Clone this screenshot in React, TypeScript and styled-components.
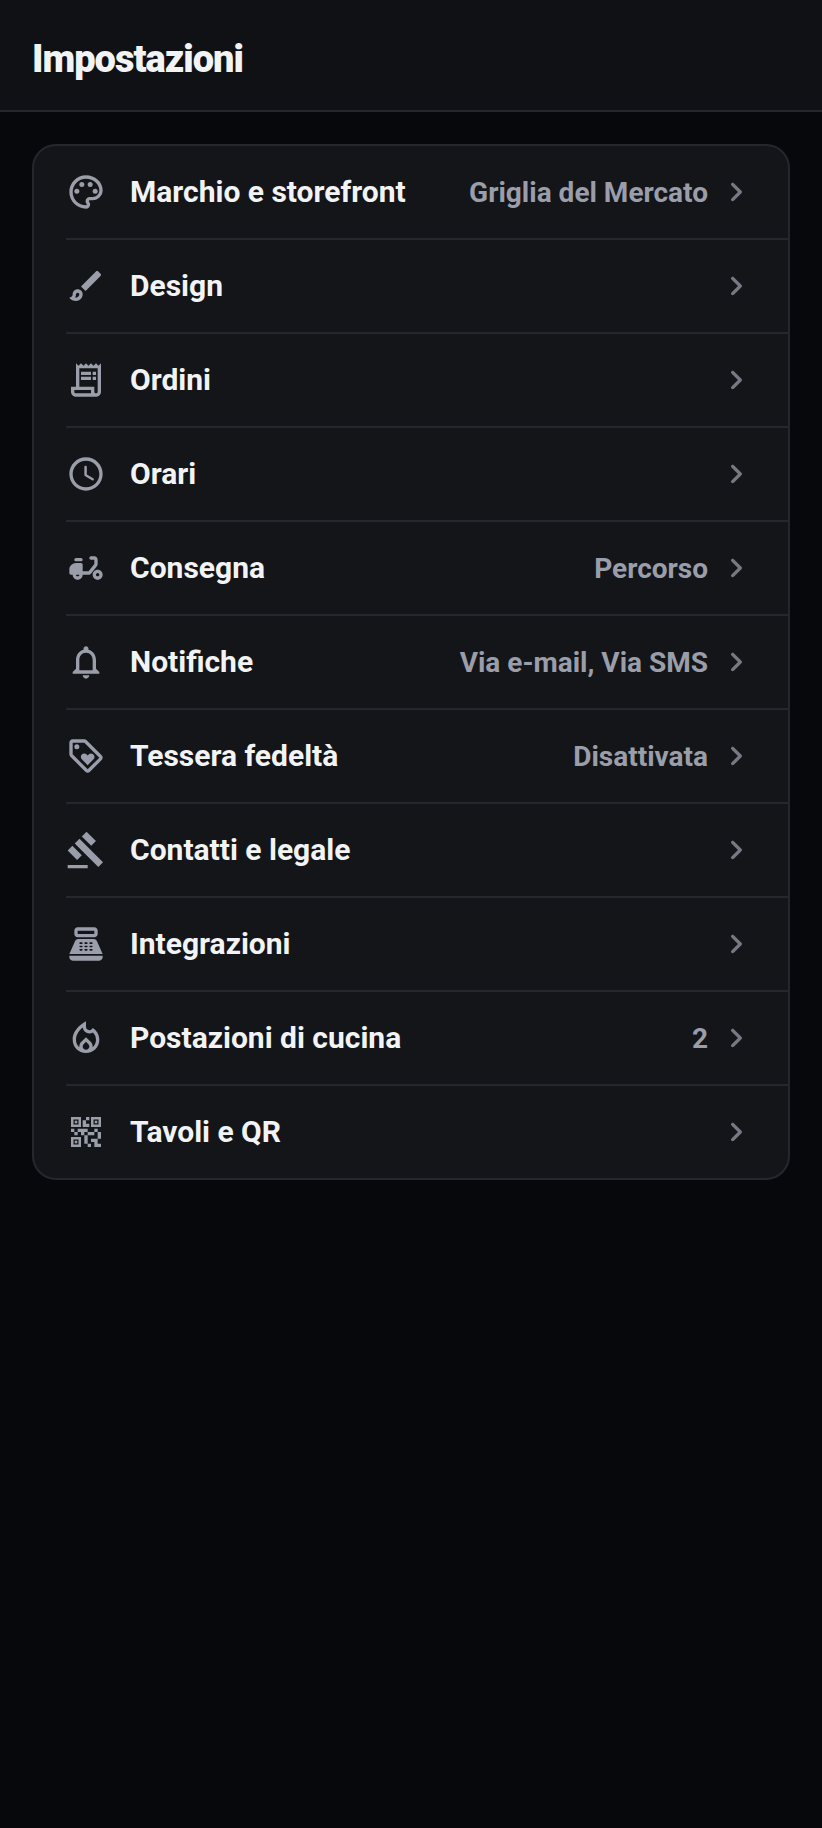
import React from 'react';
import styled, { createGlobalStyle } from 'styled-components';
import type { IconType } from 'react-icons';
import {
  MdOutlinePalette,
  MdOutlineBrush,
  MdOutlineReceiptLong,
  MdNotificationsNone,
  MdOutlineLoyalty,
  MdGavel,
  MdPointOfSale,
  MdOutlineLocalFireDepartment,
  MdQrCode2,
} from 'react-icons/md';

const color = {
  page: '#07080b',
  header: '#101114',
  card: '#141518',
  line: '#24282e',
  text: '#f2f3f5',
  muted: '#9a9eaa',
  chevron: '#767983',
};

const GlobalStyle = createGlobalStyle`
  *, *::before, *::after { box-sizing: border-box; }
  body {
    margin: 0;
    background: ${color.page};
    color: ${color.text};
    font-family: Roboto, sans-serif;
  }
`;

const Page = styled.div`
  min-height: 100vh;
`;

const Header = styled.header`
  padding: 36px 32px 28px;
  background: ${color.header};
  border-bottom: 2px solid ${color.line};
`;

const Title = styled.h1`
  margin: 0;
  font-size: 38px;
  line-height: 46px;
  font-weight: 900;
  letter-spacing: -1px;
`;

const Main = styled.main`
  padding: 32px;
`;

const Menu = styled.ul`
  margin: 0;
  padding: 0 0 0 32px;
  list-style: none;
  background: ${color.card};
  border: 2px solid ${color.line};
  border-radius: 24px;
`;

const Item = styled.li`
  & + & {
    border-top: 2px solid ${color.line};
  }
`;

const Row = styled.a`
  display: flex;
  align-items: center;
  height: 92px;
  padding-right: 32px;
  color: inherit;
  text-decoration: none;
`;

const Label = styled.span`
  flex: 1;
  margin-left: 24px;
  font-size: 30px;
  line-height: 36px;
  font-weight: 700;
`;

const Value = styled.span`
  margin-right: 8px;
  padding-top: 2px;
  color: ${color.muted};
  font-size: 28px;
  line-height: 34px;
  font-weight: 700;
`;

const Glyph = styled.svg<{ $tone: string }>`
  flex: none;
  width: 40px;
  height: 40px;
  fill: ${(p) => p.$tone};
`;

const Chevron = () => (
  <Glyph $tone={color.chevron} viewBox="0 0 24 24" aria-hidden="true">
    <path d="M9.29 6.71c-.39.39-.39 1.02 0 1.41L13.17 12l-3.88 3.88c-.39.39-.39 1.02 0 1.41.39.39 1.02.39 1.41 0l4.59-4.59c.39-.39.39-1.02 0-1.41L10.7 6.7c-.38-.38-1.02-.38-1.41.01z" />
  </Glyph>
);

const ClockIcon: IconType = () => (
  <Glyph $tone={color.muted} viewBox="0 0 24 24" aria-hidden="true">
    <path d="M11.99 2C6.47 2 2 6.48 2 12s4.47 10 9.99 10C17.52 22 22 17.52 22 12S17.52 2 11.99 2zM12 20c-4.42 0-8-3.58-8-8s3.58-8 8-8 8 3.58 8 8-3.58 8-8 8zm-.22-13h-.06c-.4 0-.72.32-.72.72v4.72c0 .35.18.68.49.86l4.15 2.49c.34.2.78.1.98-.24.21-.34.1-.79-.25-.99l-3.87-2.3V7.72c0-.4-.32-.72-.72-.72z" />
  </Glyph>
);

const MopedIcon: IconType = () => (
  <Glyph $tone={color.muted} viewBox="0 0 24 24" aria-hidden="true">
    <path d="M19 7c0-1.1-.9-2-2-2h-2c-.55 0-1 .45-1 1s.45 1 1 1h2v2.65L13.52 14H10v-4c0-.55-.45-1-1-1H6c-2.21 0-4 1.79-4 4v2c0 .55.45 1 1 1h1c0 1.66 1.34 3 3 3s3-1.34 3-3h3.52c.61 0 1.18-.28 1.56-.75l3.48-4.35c.28-.35.44-.79.44-1.25V7zM7 17c-.55 0-1-.45-1-1h2c0 .55-.45 1-1 1z" />
    <path d="M6 6h3c.55 0 1 .45 1 1s-.45 1-1 1H6c-.55 0-1-.45-1-1s.45-1 1-1zM19 13c-1.66 0-3 1.34-3 3s1.34 3 3 3 3-1.34 3-3-1.34-3-3-3zm0 4c-.55 0-1-.45-1-1s.45-1 1-1 1 .45 1 1-.45 1-1 1z" />
  </Glyph>
);

interface Entry {
  id: string;
  icon: IconType;
  label: string;
  value?: string;
}

const entries: Entry[] = [
  { id: 'marchio', icon: MdOutlinePalette, label: 'Marchio e storefront', value: 'Griglia del Mercato' },
  { id: 'design', icon: MdOutlineBrush, label: 'Design' },
  { id: 'ordini', icon: MdOutlineReceiptLong, label: 'Ordini' },
  { id: 'orari', icon: ClockIcon, label: 'Orari' },
  { id: 'consegna', icon: MopedIcon, label: 'Consegna', value: 'Percorso' },
  { id: 'notifiche', icon: MdNotificationsNone, label: 'Notifiche', value: 'Via e-mail, Via SMS' },
  { id: 'tessera', icon: MdOutlineLoyalty, label: 'Tessera fedeltà', value: 'Disattivata' },
  { id: 'contatti', icon: MdGavel, label: 'Contatti e legale' },
  { id: 'integrazioni', icon: MdPointOfSale, label: 'Integrazioni' },
  { id: 'cucina', icon: MdOutlineLocalFireDepartment, label: 'Postazioni di cucina', value: '2' },
  { id: 'tavoli', icon: MdQrCode2, label: 'Tavoli e QR' },
];

export default function App() {
  return (
    <Page>
      <GlobalStyle />
      <Header>
        <Title>Impostazioni</Title>
      </Header>
      <Main>
        <nav aria-label="Impostazioni">
          <Menu>
            {entries.map(({ id, icon: Icon, label, value }) => (
              <Item key={id}>
                <Row href={`#${id}`}>
                  <Icon size={40} color={color.muted} aria-hidden="true" />
                  <Label>{label}</Label>
                  {value && <Value>{value}</Value>}
                  <Chevron />
                </Row>
              </Item>
            ))}
          </Menu>
        </nav>
      </Main>
    </Page>
  );
}
